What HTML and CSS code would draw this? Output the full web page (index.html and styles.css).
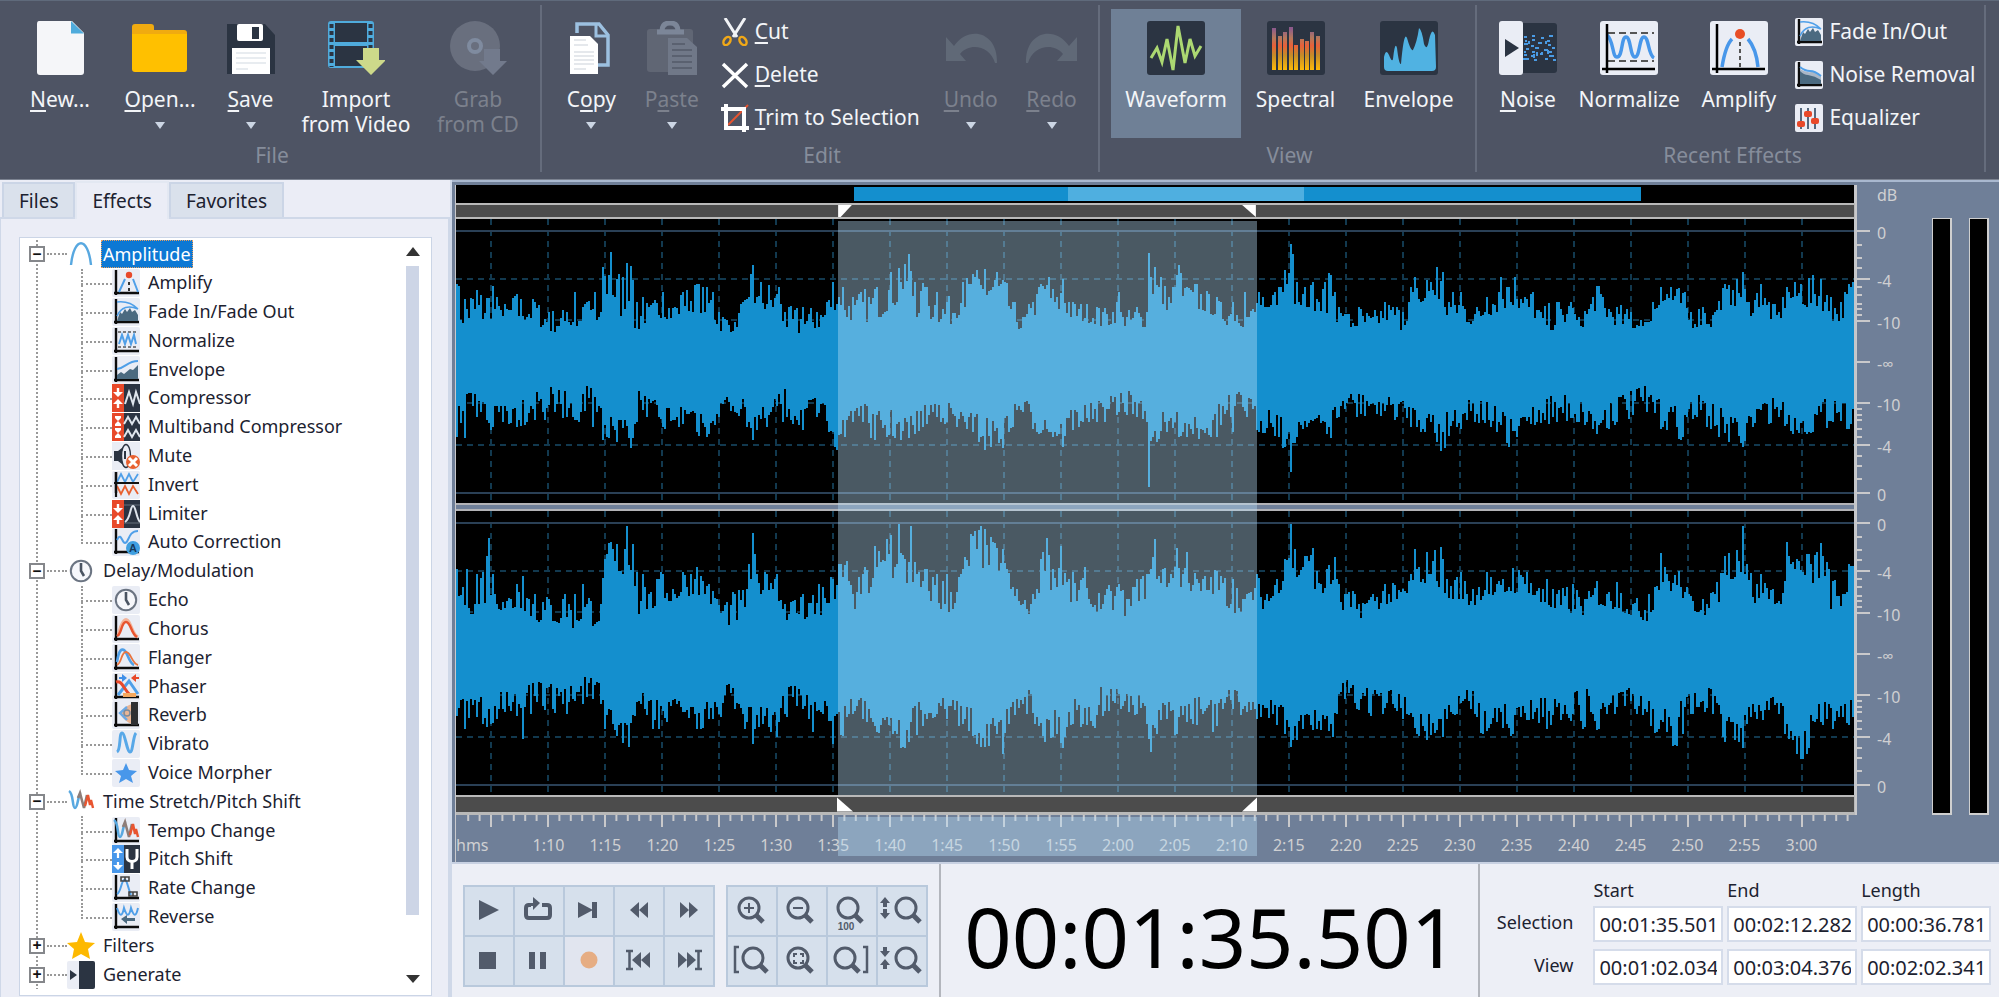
FILE: index.html
```html
<!DOCTYPE html>
<html lang="en">
<head>
    <meta charset="UTF-8">
    <title>Audio Editor</title>
    <link rel="stylesheet" href="styles.css">
</head>
<body>
<svg class="defs" aria-hidden="true">
    <symbol id="axes" viewBox="0 0 28 28">
        <rect width="28" height="28" rx="2" fill="#eaedf5"/>
        <path d="M4 1v25M2 24h25" stroke="#0c0c0c" stroke-width="2.4" fill="none"/>
    </symbol>
    <symbol id="i-amplitude" viewBox="0 0 28 28"><path d="M4 25C7 -4 21 -4 24 25" fill="none" stroke="#58a8e0" stroke-width="2.4"/></symbol>
    <symbol id="i-amplify" viewBox="0 0 28 28"><use href="#axes"/><path d="M7 23l6-13M21 10l5 13" stroke="#4f9fe8" stroke-width="2" fill="none"/><circle cx="17" cy="6" r="3.2" fill="#e8492a"/><path d="M17 13v10" stroke="#333" stroke-width="2" stroke-dasharray="3 3"/></symbol>
    <symbol id="i-fade" viewBox="0 0 28 28"><use href="#axes"/><path d="M5 23l3-9 2 2 3-5 2 3 3-4 2 4 3-2 3 5v6z" fill="#4b6a80"/><path d="M5 4c8-1 16 2 21 7M5 18C9 9 17 7 26 11" stroke="#4f9fe8" stroke-width="1.6" fill="none"/></symbol>
    <symbol id="i-normalize" viewBox="0 0 28 28"><use href="#axes"/><path d="M6 5h20M6 20h20" stroke="#555" stroke-width="1.4" stroke-dasharray="3 2"/><path d="M7 17l3-9 3 9 3-9 3 9 3-9 2 9" stroke="#4f9fe8" stroke-width="2" fill="none"/></symbol>
    <symbol id="i-envelope" viewBox="0 0 28 28"><use href="#axes"/><path d="M5 23v-4l4-3 3 2 6-5 3 1 5-5v14z" fill="#4b6a80"/><path d="M5 13c9-1 10-8 21-8" stroke="#4f9fe8" stroke-width="2" fill="none"/></symbol>
    <symbol id="i-compressor" viewBox="0 0 28 28"><path d="M0 0h12v28H0z" fill="#e8492a"/><path d="M12 0h16v28H12z" fill="#2b3442"/><path d="M6 4v7M6 24v-7" stroke="#fff" stroke-width="2.4"/><path d="M1 8h10l-5 5zM1 20h10l-5-5z" fill="#fff"/><path d="M13 20l4-12 4 12 3-12 4 12" fill="none" stroke="#dfe5ec" stroke-width="2"/></symbol>
    <symbol id="i-multiband" viewBox="0 0 28 28"><path d="M0 0h12v28H0z" fill="#e8492a"/><path d="M12 0h16v28H12z" fill="#2b3442"/><path d="M3 4h6M3 12h6M3 16h6M3 24h6" stroke="#fff" stroke-width="1.8"/><path d="M3 5h6L6 8l3 3H3l3-3zM3 17h6l-3 3 3 3H3l3-3z" fill="#fff"/><path d="M12 11l4-7 4 7 4-7 4 7M12 24l4-7 4 7 4-7 4 7" fill="none" stroke="#dfe5ec" stroke-width="2"/></symbol>
    <symbol id="i-mute" viewBox="0 0 28 28"><rect width="28" height="28" fill="#eaedf5"/><path d="M2 9h4l9-7v24l-9-7H2z" fill="#2b3442"/><ellipse cx="14" cy="14" rx="4.5" ry="11.5" fill="#eaedf5" stroke="#2b3442" stroke-width="1.4"/><path d="M13 9v8" stroke="#2b3442" stroke-width="2"/><circle cx="21" cy="20" r="7" fill="#e8602f"/><path d="M17 16l8 8M25 16l-8 8" stroke="#fff" stroke-width="3"/></symbol>
    <symbol id="i-invert" viewBox="0 0 28 28"><use href="#axes"/><path d="M2 22h25v5H2z" fill="#eaedf5"/><path d="M5 11l4-8 4 8 4-8 4 8 5-8" stroke="#4f9fe8" stroke-width="1.8" fill="none"/><path d="M5 15l4 8 4-8 4 8 4-8 5 8" stroke="#e8602f" stroke-width="1.8" fill="none"/><path d="M4 1v25M2 12h25" stroke="#111" stroke-width="2.2"/></symbol>
    <symbol id="i-limiter" viewBox="0 0 28 28"><path d="M0 0h12v28H0z" fill="#e8492a"/><path d="M12 0h16v28H12z" fill="#2b3442"/><path d="M6 4v7M6 24v-7" stroke="#fff" stroke-width="2.4"/><path d="M1 8h10l-5 5zM1 20h10l-5-5z" fill="#fff"/><path d="M12 5h16M12 23h16" stroke="#66707d"/><path d="M13 22c6-4 5-16 8-16s3 12 7 16" fill="none" stroke="#dfe5ec" stroke-width="2"/></symbol>
    <symbol id="i-auto" viewBox="0 0 28 28"><use href="#axes"/><path d="M5 12c4-9 5 3 8 3 4 0 3-12 13-12" stroke="#4f9fe8" stroke-width="2" fill="none"/><circle cx="21" cy="20" r="7" fill="#3f9fe0"/><text x="21" y="24" text-anchor="middle" class="badge-text">A</text></symbol>
    <symbol id="i-clock" viewBox="0 0 28 28"><circle cx="14" cy="14" r="10.2" fill="#f6f7fb" stroke="#6b7482" stroke-width="2"/><path d="M14 6v8l3 5" stroke="#4a5462" stroke-width="2.6" fill="none"/></symbol>
    <symbol id="i-echo" viewBox="0 0 28 28"><rect width="28" height="28" rx="2" fill="#eaedf5"/><use href="#i-clock"/></symbol>
    <symbol id="i-chorus" viewBox="0 0 28 28"><use href="#axes"/><path d="M6 21C10 4 14 2 17 7s4 13 9 15" stroke="#f3b49a" stroke-width="3" fill="none"/><path d="M5 21c5-2 4-14 9-14s5 12 11 15" stroke="#e8542f" stroke-width="2.4" fill="none"/></symbol>
    <symbol id="i-flanger" viewBox="0 0 28 28"><use href="#axes"/><path d="M5 18C7 5 10 4 13 7s4 12 9 14" stroke="#4f9fe8" stroke-width="2.6" fill="none"/><path d="M5 21c5-2 4-13 9-13s6 12 12 13" stroke="#e8743f" stroke-width="1.8" fill="none"/></symbol>
    <symbol id="i-phaser" viewBox="0 0 28 28"><use href="#axes"/><path d="M6 22L17 8l9 13" stroke="#4f9fe8" stroke-width="3" fill="none"/><path d="M4 9c6-2 7 6 14 13" stroke="#e8492a" stroke-width="3" fill="none"/><path d="M11 22h13" stroke="#f4a85e" stroke-width="4"/><path d="M7 4h3V1l5 4-5 4V6H7z" fill="#3f8fe8"/><path d="M27 4h-3V1l-5 4 5 4V6h3z" fill="#e8492a"/></symbol>
    <symbol id="i-reverb" viewBox="0 0 28 28"><use href="#axes"/><path d="M20 3C12 5 8 12 8 12s3 8 12 11z" fill="#e9b595"/><path d="M15 6l-7 6 7 7" stroke="#68a9e8" stroke-width="2.4" fill="none"/><circle cx="15" cy="12" r="3" fill="none" stroke="#7b8b9c" stroke-width="1.5"/><path d="M19 1h7v23h-7z" fill="#2d2f33"/></symbol>
    <symbol id="i-vibrato" viewBox="0 0 28 28"><rect width="28" height="28" rx="2" fill="#eaedf5"/><path d="M5 22C9 20 7 3 10 3s5 19 8 19S21 6 24 3" stroke="#58a8e8" stroke-width="3" fill="none"/></symbol>
    <symbol id="i-morpher" viewBox="0 0 28 28"><rect width="28" height="28" rx="2" fill="#eaedf5"/><path d="M14 4l3 7 8 1-6 5 2 7-7-4-7 4 2-7-6-5 8-1z" fill="#4897ea"/></symbol>
    <symbol id="i-stretch" viewBox="0 0 28 28"><path d="M2 3c5 3 3 17 6 17S11 5 14 6" stroke="#58a8e0" stroke-width="2.6" fill="none"/><path d="M11 10l2-5 4 15 3-13" stroke="#8e7d78" stroke-width="2.6" fill="none"/><path d="M18 18l3-11 2 10 1-5 2 8" stroke="#e8542f" stroke-width="2.4" fill="none"/></symbol>
    <symbol id="i-tempo" viewBox="0 0 28 28"><use href="#axes"/><use href="#i-stretch"/></symbol>
    <symbol id="i-pitch" viewBox="0 0 28 28"><path d="M0 0h12v28H0z" fill="#4897ea"/><path d="M12 0h16v28H12z" fill="#2b3442"/><path d="M6 5v8M6 17v6" stroke="#fff" stroke-width="2.2"/><path d="M1 8h10L6 3zM1 20h10l-5 5z" fill="#fff"/><path d="M15 4v8c0 6 10 6 10 0V4M20 16v8" stroke="#fff" stroke-width="3" fill="none"/></symbol>
    <symbol id="i-rate" viewBox="0 0 28 28"><use href="#axes"/><path d="M5 20C9 18 9 8 12 6s4 9 7 15" stroke="#4f9fe8" stroke-width="2" fill="none"/><path d="M9 3h8v4H9zM13 3v4M17 18h8v4h-8zM21 18v4" stroke="#444" stroke-width="1.6" fill="none"/></symbol>
    <symbol id="i-reverse" viewBox="0 0 28 28"><use href="#axes"/><path d="M5 5c3 9 5 9 7 0 3 9 5 9 7 0 3 9 5 9 7 0" stroke="#4f9fe8" stroke-width="2" fill="none"/><path d="M9 16l6-4v3h8v3h-8v3z" fill="#4b6a80"/></symbol>
    <symbol id="i-star" viewBox="0 0 28 28"><path d="M14 0l4 10 10 1-7 6 2 10-9-5-9 5 2-10-7-6 10-1z" fill="#fdb900"/></symbol>
    <symbol id="i-generate" viewBox="0 0 28 28"><rect width="28" height="28" rx="2" fill="#eaedf5"/><path d="M12 0h14q2 0 2 2v24q0 2-2 2H12z" fill="#2b3442"/><path d="M3 9l7 5-7 5z" fill="#2b3442"/></symbol>
    <symbol id="i-lens" viewBox="0 0 48 48"><circle cx="21" cy="21" r="10" fill="none" stroke="#525b6b" stroke-width="3"/><path d="M28 28l7 7" stroke="#525b6b" stroke-width="5"/></symbol>
</svg>

<header class="ribbon">
    <section class="group file">
        <div class="tools">
            <button class="tool"><svg viewBox="0 0 58 54"><path d="M8 0h33l12 12v39q0 3-3 3H9q-3 0-3-3V3q0-3 2-3z" fill="#f5f6f9"/><path d="M40 0l13 12.5H40z" fill="#4fabdc"/></svg><span><u>N</u>ew...</span></button>
            <button class="tool"><svg viewBox="0 0 58 54"><path d="M1 6q0-3 3-3h16q3 0 3 3v3h30q3 0 3 3v6H1z" fill="#f0ab10"/><path d="M1 13h55v35q0 3-3 3H4q-3 0-3-3z" fill="#ffc000"/></svg><span><u>O</u>pen...</span><i class="drop"></i></button>
            <button class="tool"><svg viewBox="0 0 58 54"><path d="M5 3h38l10 11v39H5z" fill="#2b3442"/><rect x="15" y="3" width="26" height="17" rx="2" fill="#fff"/><path d="M30 6h7v12h-7z" fill="#2b3442"/><path d="M10 27h38v26H10z" fill="#fff"/><path d="M14 32h30M14 37h30M14 42h30M14 48h12" stroke="#e8ecf0" stroke-width="2"/></svg><span><u>S</u>ave</span><i class="drop"></i></button>
            <button class="tool"><svg viewBox="0 0 58 54"><rect x="1" width="46" height="47" rx="3" fill="#4fabdc"/><path d="M8 2h32v19H8zM8 25h32v20H8z" fill="#2b3442"/><path d="M4.5 3v43M43.5 3v43" stroke="#2b3442" stroke-width="4" stroke-dasharray="4 3"/><path d="M36 27h16v12h7L44 54 29 39h7z" fill="#cdd98a"/></svg><span>Import<br>from Video</span></button>
            <button class="tool" disabled><svg viewBox="0 0 58 54"><circle cx="26" cy="25" r="25" fill="#696f7e"/><circle cx="26" cy="25" r="6" fill="none" stroke="#7f8b9f" stroke-width="4"/><path d="M35 28h16v12h7L44 54 30 40h5z" fill="#727a8c"/></svg><span>Grab<br>from CD</span></button>
        </div>
        <h2>File</h2>
    </section>
    <section class="group edit">
        <div class="tools">
            <button class="tool"><svg viewBox="0 0 58 54"><path d="M15 12V3h22l9 11v30H36" fill="none" stroke="#9cc0e0" stroke-width="3.5"/><path d="M34 4v11h12" fill="none" stroke="#9cc0e0" stroke-width="3"/><path d="M8 15h20l8 8v30H8z" fill="#fff"/><path d="M12 19h12M12 24h14M12 31h20M12 35h20M12 39h20M12 43h20M12 48h12" stroke="#dde1e6" stroke-width="1.5"/></svg><span>C<u>o</u>py</span><i class="drop"></i></button>
            <button class="tool" disabled><svg viewBox="0 0 58 54"><rect x="4" y="8" width="46" height="43" rx="3" fill="#606674"/><path d="M14 11h27M19 10q0-8 8-8t8 8" fill="none" stroke="#7c8698" stroke-width="5"/><path d="M25 17h19l10 9v28H25z" fill="#707888"/><path d="M29 23h13M29 29h20M29 35h20M29 41h20M29 47h20" stroke="#5a6170" stroke-width="2"/></svg><span>P<u>a</u>ste</span><i class="drop"></i></button>
            <div class="stack">
                <button class="mini"><svg viewBox="0 0 28 28"><path d="M4 0l12 19M24 0L12 19" stroke="#f1f3f6" stroke-width="3"/><ellipse cx="6" cy="23" rx="3" ry="4.5" transform="rotate(35 6 23)" fill="none" stroke="#f0a818" stroke-width="2.5"/><ellipse cx="22" cy="23" rx="3" ry="4.5" transform="rotate(-35 22 23)" fill="none" stroke="#f0a818" stroke-width="2.5"/></svg><span><u>C</u>ut</span></button>
                <button class="mini"><svg viewBox="0 0 28 28"><path d="M2 3l24 23M26 3L2 26" stroke="#fff" stroke-width="3.5"/></svg><span><u>D</u>elete</span></button>
                <button class="mini"><svg viewBox="0 0 28 28"><path d="M7 21L27 1" stroke="#e8542f" stroke-width="2"/><path d="M5 0v24h23M0 5h23v23" fill="none" stroke="#fff" stroke-width="4"/></svg><span><u>T</u>rim to Selection</span></button>
            </div>
            <button class="tool" disabled><svg viewBox="0 0 58 54"><path d="M4 16v24h20l-6-7c10-12 30-8 35 9h2C56 10 26 4 12 25z" fill="#606977"/></svg><span><u>U</u>ndo</span><i class="drop"></i></button>
            <button class="tool" disabled><svg viewBox="0 0 58 54"><path d="M54 16v24H34l6-7C30 21 10 25 5 42H3C2 10 32 4 46 25z" fill="#606977"/></svg><span><u>R</u>edo</span><i class="drop"></i></button>
        </div>
        <h2>Edit</h2>
    </section>
    <section class="group view">
        <div class="tools">
            <button class="tool on"><svg viewBox="0 0 58 54"><rect width="58" height="54" rx="3" fill="#2b3442"/><path d="M4 37l6-10 5 14 5-23 6 31 5-44 7 37 5-24 5 17 6-10" fill="none" stroke="#acd872" stroke-width="3"/></svg><span>Waveform</span></button>
            <button class="tool"><svg viewBox="0 0 58 54"><defs><linearGradient id="heat" x2="0" y2="49" gradientUnits="userSpaceOnUse"><stop offset=".15" stop-color="#8c5a8c"/><stop offset=".35" stop-color="#b5795a"/><stop offset=".5" stop-color="#e8603a"/><stop offset=".7" stop-color="#c58c28"/><stop offset="1" stop-color="#fdb90a"/></linearGradient></defs><rect width="58" height="54" rx="3" fill="#2b3442"/><path d="M5 7h4v42H5zM11 15h4v34h-4zM16 11h4v38h-4zM22 6h4v43h-4zM27 24h4v25h-4zM33 18h4v31h-4zM38 20h4v29h-4zM43 11h4v38h-4zM49 15h4v34h-4z" fill="url(#heat)"/></svg><span>Spectral</span></button>
            <button class="tool"><svg viewBox="0 0 58 54"><rect width="58" height="54" rx="3" fill="#2b3442"/><path d="M4 46V36q2-9 5-2 3 8 4 4 2-19 4-11 2 17 4 16 3-34 6-26 4 14 6 12 4-8 6-22 3 2 5 16 3 8 5-4 3-14 6-5l1 32q0 4-4 4H8q-4 0-4-4z" fill="#50b2e2"/></svg><span>Envelope</span></button>
        </div>
        <h2>View</h2>
    </section>
    <section class="group recent">
        <div class="tools">
            <button class="tool"><svg viewBox="0 0 58 54"><rect x="16" y="2" width="42" height="50" rx="3" fill="#2b3442"/><rect width="24" height="54" rx="3" fill="#eaedf5"/><path d="M6 18l14 9-14 9z" fill="#2b3442"/><path d="M25 16h3m5-1h3m6 2h3m5-2h4M26 20h2m5-1h3m4 3h2m6-2h3M25 23h4m3 2h3m4-3h4m6 2h3M27 28h3m6-1h4m5 2h4m4-2h3M25 31h2m6 0h3m6 1h2m5-1h4M25 34h3m4 1h4m5-2h3m6 2h5M24 38h6m5 1h3m8-1h3m5 1h3M30 20v3m8 8v4m9-15v3m-12 10v4m14-8v4" stroke="#4a9be4" stroke-width="2" fill="none"/></svg><span><u>N</u>oise</span></button>
            <button class="tool"><svg viewBox="0 0 58 54"><rect width="58" height="54" rx="3" fill="#eaedf5"/><path d="M8 12h46M8 40h46" stroke="#555" stroke-width="2" stroke-dasharray="7 4"/><path d="M7 14c7 6 5 22 10 22 6 0 4-20 9-20s4 20 9 20 4-20 9-20 4 18 10 21" fill="none" stroke="#4897ea" stroke-width="3.5"/><path d="M7 3v49M2 48h53" stroke="#000" stroke-width="2.5"/></svg><span>Normalize</span></button>
            <button class="tool"><svg viewBox="0 0 58 54"><rect width="58" height="54" rx="3" fill="#eaedf5"/><path d="M12 46C14 34 17 23 22 18M38 18c6 7 9 18 10 28" fill="none" stroke="#4897ea" stroke-width="3.5"/><circle cx="30" cy="13" r="5" fill="#e84e26"/><path d="M30 21v26" stroke="#555" stroke-width="2" stroke-dasharray="4 3"/><path d="M7 3v49M2 48h53" stroke="#000" stroke-width="2.5"/></svg><span>Amplify</span></button>
            <div class="stack">
                <button class="mini"><svg><use href="#i-fade"/></svg><span>Fade In/Out</span></button>
                <button class="mini"><svg viewBox="0 0 28 28"><use href="#axes"/><path d="M5 8q6 4 11 3t10 4v8H5z" fill="#aab7c6"/><path d="M5 10q4 4 8 4 7 1 13 5v4H5z" fill="#4b6a80"/><path d="M5 6q5 4 10 4t11 5" stroke="#4f9fe8" stroke-width="2" fill="none"/></svg><span>Noise Removal</span></button>
                <button class="mini"><svg viewBox="0 0 28 28"><rect width="28" height="28" rx="2" fill="#eaedf5"/><path d="M6 4v21M13 4v21M20 4v21" stroke="#54687e" stroke-width="2"/><rect x="2" y="17" width="8" height="6" rx="2" fill="#e8492a"/><rect x="9" y="7" width="8" height="6" rx="2" fill="#e8492a"/><rect x="16" y="14" width="8" height="6" rx="2" fill="#e8492a"/></svg><span>Equalizer</span></button>
            </div>
        </div>
        <h2>Recent Effects</h2>
    </section>
</header>

<div class="main">
    <aside class="side">
        <div class="tabs">
            <button>Files</button>
            <button class="on">Effects</button>
            <button>Favorites</button>
        </div>
        <div class="pane">
            <div class="treebox">
                <ul class="tree">
                    <li class="root"><button aria-label="Collapse">&#8722;</button><i class="dots"></i><svg><use href="#i-amplitude"/></svg><a href="#" class="picked">Amplitude</a></li>
                    <li><i class="twig"></i><svg><use href="#i-amplify"/></svg><a href="#">Amplify</a></li>
                    <li><i class="twig"></i><svg><use href="#i-fade"/></svg><a href="#">Fade In/Fade Out</a></li>
                    <li><i class="twig"></i><svg><use href="#i-normalize"/></svg><a href="#">Normalize</a></li>
                    <li><i class="twig"></i><svg><use href="#i-envelope"/></svg><a href="#">Envelope</a></li>
                    <li><i class="twig"></i><svg><use href="#i-compressor"/></svg><a href="#">Compressor</a></li>
                    <li><i class="twig"></i><svg><use href="#i-multiband"/></svg><a href="#">Multiband Compressor</a></li>
                    <li><i class="twig"></i><svg><use href="#i-mute"/></svg><a href="#">Mute</a></li>
                    <li><i class="twig"></i><svg><use href="#i-invert"/></svg><a href="#">Invert</a></li>
                    <li><i class="twig"></i><svg><use href="#i-limiter"/></svg><a href="#">Limiter</a></li>
                    <li class="last"><i class="twig"></i><svg><use href="#i-auto"/></svg><a href="#">Auto Correction</a></li>
                    <li class="root"><button aria-label="Collapse">&#8722;</button><i class="dots"></i><svg><use href="#i-clock"/></svg><a href="#">Delay/Modulation</a></li>
                    <li><i class="twig"></i><svg><use href="#i-echo"/></svg><a href="#">Echo</a></li>
                    <li><i class="twig"></i><svg><use href="#i-chorus"/></svg><a href="#">Chorus</a></li>
                    <li><i class="twig"></i><svg><use href="#i-flanger"/></svg><a href="#">Flanger</a></li>
                    <li><i class="twig"></i><svg><use href="#i-phaser"/></svg><a href="#">Phaser</a></li>
                    <li><i class="twig"></i><svg><use href="#i-reverb"/></svg><a href="#">Reverb</a></li>
                    <li><i class="twig"></i><svg><use href="#i-vibrato"/></svg><a href="#">Vibrato</a></li>
                    <li class="last"><i class="twig"></i><svg><use href="#i-morpher"/></svg><a href="#">Voice Morpher</a></li>
                    <li class="root"><button aria-label="Collapse">&#8722;</button><i class="dots"></i><svg><use href="#i-stretch"/></svg><a href="#">Time Stretch/Pitch Shift</a></li>
                    <li><i class="twig"></i><svg><use href="#i-tempo"/></svg><a href="#">Tempo Change</a></li>
                    <li><i class="twig"></i><svg><use href="#i-pitch"/></svg><a href="#">Pitch Shift</a></li>
                    <li><i class="twig"></i><svg><use href="#i-rate"/></svg><a href="#">Rate Change</a></li>
                    <li class="last"><i class="twig"></i><svg><use href="#i-reverse"/></svg><a href="#">Reverse</a></li>
                    <li class="root"><button aria-label="Expand">+</button><i class="dots"></i><svg><use href="#i-star"/></svg><a href="#">Filters</a></li>
                    <li class="root"><button aria-label="Expand">+</button><i class="dots"></i><svg><use href="#i-generate"/></svg><a href="#">Generate</a></li>
                </ul>
                <div class="scroll"><i class="up"></i><i class="thumb"></i><i class="down"></i></div>
            </div>
        </div>
    </aside>

    <main class="work">
        <div class="editor">
            <div class="waves">
                <div class="overview"><i class="before"></i><i class="shown"></i><i class="chosen"></i><i class="shown tail"></i><i class="after"></i></div>
                <div class="band top">
                    <i class="pre"></i>
                    <span class="sel"><svg viewBox="0 0 16 14"><path d="M0 0h16L3 14H0z"/></svg><svg viewBox="0 0 16 14"><path d="M0 0h16v14z"/></svg></span>
                    <i class="post"></i>
                </div>
                <div class="channels">
                    <svg class="channel" viewBox="0 0 1398 284" preserveAspectRatio="none"></svg>
                    <div class="split"></div>
                    <svg class="channel" viewBox="0 0 1398 284" preserveAspectRatio="none"></svg>
                    <div class="shade"></div>
                </div>
                <div class="band bottom">
                    <i class="pre"></i>
                    <span class="sel"><svg viewBox="0 0 16 14"><path d="M0 0l16 14H0z"/></svg><svg viewBox="0 0 16 14"><path d="M16 0v14H1z"/></svg></span>
                    <i class="post"></i>
                </div>
                <div class="ruler">
                    <svg id="ticks" viewBox="0 0 1398 14" preserveAspectRatio="none"></svg>
                    <div class="times" id="times"><span class="unit">hms</span></div>
                    <div class="shade"></div>
                </div>
            </div>
            <svg class="scale" id="scale" width="76" height="630"></svg>
            <div class="meters"><i></i><i></i></div>
        </div>

        <div class="controls">
            <div class="pads">
                <div class="pad transport">
                    <button aria-label="Play"><svg viewBox="0 0 48 48"><path d="M14 13l20 10-20 10z"/></svg></button>
                    <button aria-label="Loop"><svg viewBox="0 0 48 48"><path d="M16 18h-2q-3 0-3 3v7q0 3 3 3h18q3 0 3-3v-7q0-3-3-3h-5" fill="none" stroke="#525b6b" stroke-width="4"/><path d="M18 10l7 6-7 7z"/><path d="M13 16h7v3h-7z"/></svg></button>
                    <button aria-label="Play to end"><svg viewBox="0 0 48 48"><path d="M13 15l15 8-15 8zM27 15h5v16h-5z"/></svg></button>
                    <button aria-label="Rewind"><svg viewBox="0 0 48 48"><path d="M24 15v16l-9-8zM33 15v16l-9-8z"/></svg></button>
                    <button aria-label="Forward"><svg viewBox="0 0 48 48"><path d="M15 15v16l9-8zM24 15v16l9-8z"/></svg></button>
                    <button aria-label="Stop"><svg viewBox="0 0 48 48"><path d="M14 15h17v17H14z"/></svg></button>
                    <button aria-label="Pause"><svg viewBox="0 0 48 48"><path d="M14 15h6v17h-6zM25 15h6v17h-6z"/></svg></button>
                    <button aria-label="Record" class="record"><svg viewBox="0 0 48 48"><circle cx="24" cy="23" r="8.5" fill="#e6ad83"/></svg></button>
                    <button aria-label="To start"><svg viewBox="0 0 48 48"><path d="M26 15v16l-9-8zM35 15v16l-9-8z"/><path d="M11 14h7M11 32h7M14.5 14v18" stroke="#525b6b" stroke-width="2.5"/></svg></button>
                    <button aria-label="To end"><svg viewBox="0 0 48 48"><path d="M13 15v16l9-8zM22 15v16l9-8z"/><path d="M30 14h7M30 32h7M33.5 14v18" stroke="#525b6b" stroke-width="2.5"/></svg></button>
                </div>
                <div class="pad zooms">
                    <button aria-label="Zoom in"><svg viewBox="0 0 48 48"><use href="#i-lens"/><path d="M16 21h10M21 16v10" stroke="#525b6b" stroke-width="2"/></svg></button>
                    <button aria-label="Zoom out"><svg viewBox="0 0 48 48"><use href="#i-lens" x="-1"/><path d="M15 21h10" stroke="#525b6b" stroke-width="2"/></svg></button>
                    <button aria-label="Zoom 100"><svg viewBox="0 0 48 48"><use href="#i-lens" x="-1"/><text x="18" y="43" text-anchor="middle" class="hundred">100</text></svg></button>
                    <button aria-label="Zoom in vertically"><svg viewBox="0 0 48 48"><use href="#i-lens" x="7"/><path d="M2 16l5-6 5 6H9v4H5v-4zM2 26l5 6 5-6H9v-4H5v4z"/></svg></button>
                    <button aria-label="Zoom to start"><svg viewBox="0 0 48 48"><use href="#i-lens" x="4"/><path d="M11 10H7v25h4" fill="none" stroke="#525b6b" stroke-width="2.5"/></svg></button>
                    <button aria-label="Zoom to selection"><svg viewBox="0 0 48 48"><use href="#i-lens" x="-1"/><path d="M16 20v-3h3M22 17h3v3M25 23v3h-3M19 26h-3v-3" fill="none" stroke="#525b6b" stroke-width="2"/></svg></button>
                    <button aria-label="Zoom to end"><svg viewBox="0 0 48 48"><use href="#i-lens" x="-4"/><path d="M35 10h4v25h-4" fill="none" stroke="#525b6b" stroke-width="2.5"/></svg></button>
                    <button aria-label="Zoom out vertically"><svg viewBox="0 0 48 48"><use href="#i-lens" x="7"/><path d="M2 14l5 6 5-6H9v-4H5v4zM2 28l5-6 5 6H9v4H5v-4z"/></svg></button>
                </div>
            </div>
            <div class="clock">00:01:35.501</div>
            <div class="fields">
                <span></span><b>Start</b><b>End</b><b>Length</b>
                <label for="sel-start">Selection</label>
                <input id="sel-start" value="00:01:35.501"><input aria-label="Selection end" value="00:02:12.282"><input aria-label="Selection length" value="00:00:36.781">
                <label for="view-start">View</label>
                <input id="view-start" value="00:01:02.034"><input aria-label="View end" value="00:03:04.376"><input aria-label="View length" value="00:02:02.341">
            </div>
        </div>
    </main>
</div>
<script src="script.js"></script>
</body>
</html>
```

FILE: styles.css
```css
*{ margin:0; padding:0; box-sizing:border-box;}
body{
    min-height: 100vh;
    padding-bottom: 4px;
    display: flex;
    flex-direction: column;
    background: #fff;
    font-family: "Noto Sans", "Open Sans", sans-serif;
    font-size: 18px;
    color: #1c2230;
}
button{
    border: 0;
    background: none;
    font: inherit;
    color: inherit;
}
a{ color: inherit; text-decoration: none;}
ul{ list-style: none;}
i{ font-style: normal; display: block;}
.defs{ display: none;}
.badge-text{ font: bold 11px "Liberation Sans", sans-serif; fill: #16395c;}
.hundred{ font: bold 10px "Liberation Sans", sans-serif; fill: #525b6b;}

/* ribbon */
.ribbon{
    height: 180px;
    padding: 4px 0 7px;
    border-top: 1px solid #5f6a7b;
    border-bottom: 1px solid #7b8290;
    background: #4e5464;
    display: grid;
    grid-template-columns: 542fr 558fr 377fr 509fr 13fr;
    color: #f3f5f8;
    font-size: 21px;
    line-height: 25px;
}
.group{
    padding-top: 4px;
    border-right: 2px solid #656c7c;
    min-width: 0;
}
.tools{
    display: grid;
    height: 129px;
}
.file .tools{ grid-template-columns: 100fr 100fr 81fr 130fr 114fr; padding: 0 5px 0 10px;}
.edit .tools{ grid-template-columns: 81fr 80fr 219fr 81fr 81fr; padding: 0 6px 0 9px;}
.view .tools{ grid-template-columns: 130fr 109fr 117fr; padding: 0 8px 0 11px;}
.recent .tools{ grid-template-columns: 90fr 113fr 107fr 187fr; padding: 0 5px 0 6px;}
.group h2{
    margin-top: 5px;
    padding-left: 4px;
    text-align: center;
    font-size: 21px;
    font-weight: normal;
    color: #868d9b;
}
.tool{
    display: flex;
    flex-direction: column;
    align-items: center;
    padding-top: 12px;
    white-space: nowrap;
    min-width: 0;
}
.tool svg{ width: 58px; height: 54px; margin-bottom: 12px; flex: none;}
.tool.on{ background: #6f8096;}
.tool:disabled{ color: #7c818d;}
u{ text-underline-offset: 3px; text-decoration-thickness: 2px;}
.drop{
    margin-top: 10px;
    border: 5px solid transparent;
    border-top: 7px solid #ccd6e4;
    border-bottom: 0;
}
.stack{ display: grid; grid-auto-rows: 1fr;}
.edit .stack{ padding-left: 9px;}
.recent .stack{ padding-left: 3px;}
.mini{
    display: flex;
    align-items: center;
    gap: 6px;
    padding-top: 2px;
    white-space: nowrap;
}
.mini svg{ width: 28px; height: 28px; flex: none;}

/* effects tree */
.main{ flex: 1; display: flex;}
.side{
    flex: 0 0 452px;
    display: flex;
    flex-direction: column;
    background: #ebedf6;
    border-right: 2px solid #cfd8e8;
}
.tabs{
    display: flex;
    align-items: flex-end;
    padding-left: 2px;
    height: 37px;
    font-size: 19px;
}
.tabs button{
    height: 35px;
    padding: 0 15px;
    background: #dae1ec;
    border: 2px solid #cbd5e6;
    border-bottom: 0;
    line-height: 34px;
}
.tabs .on{
    height: 38px;
    margin-bottom: -2px;
    background: #ebedf6;
    border-color: #e3e8f2;
    z-index: 1;
    line-height: 32px;
}
.pane{
    flex: 1;
    padding: 18px 16px 1px 18px;
    border: 2px solid #cfd8e8;
    border-width: 2px 2px 0 1px;
    display: flex;
}
.treebox{
    flex: 1;
    display: flex;
    padding: 2px 12px 6px 0;
    background: #fff;
    border: 1px solid #cbd5e6;
}
.tree{
    flex: 1;
    display: grid;
    grid-auto-rows: 1fr;
    background: linear-gradient(#999 50%, transparent 0) 16px 20px / 2px 4px repeat-y;
}
.tree li{
    display: flex;
    align-items: center;
    padding-left: 61px;
    min-height: 28px;
    line-height: 26px;
}
.tree li.root{ padding-left: 9px;}
.tree li svg{ width: 28px; height: 28px; flex: none;}
.tree button{
    width: 16px;
    height: 16px;
    border: 2px solid #85878b;
    background: #fff;
    color: #111;
    font-size: 16px;
    font-weight: bold;
    line-height: 11px;
}
.tree a{ margin-left: 6px; padding: 0 2px; height: 28px;}
.tree .picked{
    color: #fff;
    background: #0c78d4;
    border: 1px dotted #e8a060;
    padding: 0 1px;
}
.dots{ width: 20px; margin: 0 0 0 2px; border-top: 2px dotted #999;}
.twig{ width: 31px; align-self: stretch;}
.twig::before, .twig::after{
    content: "";
    display: block;
    height: 50%;
    border-left: 2px dotted #999;
}
.twig::before{ border-bottom: 2px dotted #999;}
.last .twig::after{ border: 0;}
.scroll{
    width: 13px;
    display: flex;
    flex-direction: column;
    align-items: center;
    padding: 7px 0 6px;
}
.up, .down{ border: 7px solid transparent;}
.up{ border-top: 0; border-bottom: 9px solid #333;}
.down{ border-bottom: 0; border-top: 8px solid #333;}
.thumb{ width: 13px; flex: 1; margin: 10px 0 60px; background: #cdd5e6;}

/* waveform editor */
.work{ flex: 1; min-width: 0; display: flex; flex-direction: column;}
.editor{
    display: flex;
    padding: 3px 10px 0 3px;
    border-top: 2px solid #a9b8cf;
    background: #6f7f98;
}
.waves{
    flex: 1;
    min-width: 0;
    border-left: 1px solid #c9c9cc;
}
.overview{
    display: flex;
    height: 18px;
    padding: 2px 0;
    background: #000;
    border-right: 2px solid #c4c6ca;
}
.before{ flex: 398;}
.shown{ flex: 214; background: #148fce;}
.chosen{ flex: 236; background: #4fafe0;}
.shown.tail{ flex: 337;}
.after{ flex: 213;}
.band{
    display: flex;
    background: #4c4c4c;
    border: 2px solid #b9b9b9;
    border-left: 0;
}
.band.top{ height: 16px;}
.band.bottom{ height: 20px; border-bottom-width: 3px;}
.band .pre{ flex: 381;}
.band .sel{ flex: 420; display: flex; justify-content: space-between;}
.band .post{ flex: 597;}
.band svg{ width: 16px; height: 100%; fill: #fff;}
.channels{
    position: relative;
    background: #000;
    border-right: 2px solid #c4c6ca;
}
.channel{ display: block; width: 100%; height: 284px;}
.split{
    height: 8px;
    background: #6f7f98;
    border: solid #b3b3b6;
    border-width: 2px 0;
}
.wave{ fill: #148fce;}
.grid{ stroke: #12394f; stroke-width: 2; stroke-dasharray: 6 5; fill: none; vector-effect: non-scaling-stroke;}
.limit{ stroke: #2a4056; stroke-width: 2; vector-effect: non-scaling-stroke;}
.shade{
    position: absolute;
    top: 2px;
    bottom: 0;
    left: 27.3%;
    width: 30%;
    background: rgba(185,222,248,.4);
}
.ruler{
    position: relative;
    height: 47px;
    margin-right: 2px;
}
.ruler svg{ display: block; width: 100%; height: 14px;}
.ruler .shade{ bottom: 6px;}
.tick{ stroke: #c9c9cb; stroke-width: 2; fill: none; vector-effect: non-scaling-stroke;}
.times{
    display: flex;
    padding-top: 5px;
    font-size: 16px;
    line-height: 22px;
    color: #cfd0d2;
    white-space: nowrap;
}
.times span{ flex: 57 0 0; text-align: center; min-width: 0;}
.times .unit{ flex-grow: 64; text-align: left;}
.times .rest{ flex-grow: 24;}
.scale{ flex: none; overflow: visible; font-size: 16px; fill: #cfd0d2;}
.meters{ display: flex; gap: 17px; padding: 33px 0 0; height: 630px;}
.meters i{
    width: 20px;
    background: #000;
    border: 1px solid #cfcfcf;
    border-width: 1px 2px 2px 1px;
}

/* transport and time fields */
.controls{
    flex: 1;
    display: grid;
    grid-template-columns: auto 540fr 519fr;
    border-top: 2px solid #c8d1e2;
    background: #edeff6;
}
.pads{ display: flex; gap: 11px; padding: 21px 11px 0;}
.pad{
    display: grid;
    align-self: start;
    gap: 2px;
    padding: 2px;
    background: #b9c9dc;
    grid-template-columns: repeat(5, 48px);
}
.zooms{ grid-template-columns: repeat(4, 48px);}
.pad button{ height: 48px; background: #d6e0ec;}
.pad button.record{ background: #e1e5ef;}
.pad svg{ display: block; width: 48px; height: 48px; fill: #525b6b;}
.clock{
    border: solid #b3b6bd;
    border-width: 0 2px;
    display: flex;
    justify-content: center;
    font-size: 83px;
    line-height: 114px;
    padding: 15px 0 0 4px;
    color: #000;
}
.fields{
    display: grid;
    grid-template-columns: 110fr 130fr 130fr 130fr;
    grid-template-rows: 22px 36px 36px;
    gap: 7px 4px;
    padding: 13px 8px 0 0;
}
.fields b{ font-weight: normal; line-height: 26px;}
.fields label{ text-align: right; padding-right: 16px; line-height: 32px;}
.fields input{
    min-width: 0;
    width: 100%;
    border: 2px solid #d5dcea;
    background: #fff;
    padding: 0 4px;
    font: 20px "Noto Sans", sans-serif;
    color: #1c2230;
}
```

FILE: script.js
```js
// envelope knots for each side of each channel: x, low, high
var data=[
    {
        up:'0,38,78 20,40,72 36,48,76 44,44,52 60,44,68 78,45,60 92,33,50 110,38,50 118,35,70 125,25,55 130,42,60 137,35,70 143,31,50 146,62,95 153,70,110 162,45,88 170,60,99 173,65,96 179,28,60 186,45,65 192,38,55 205,50,70 218,45,55 226,55,70 240,55,78 255,50,70 262,36,50 278,35,40 285,50,60 292,45,65 295,60,97 300,50,65 304,55,80 322,50,75 327,36,50 345,30,55 360,38,50 370,40,60 375,55,80 385,60,75 396,28,65 404,45,70 420,45,75 434,60,90 441,60,94 444,65,80 452,80,108 458,50,80 468,48,75 480,45,70 490,38,60 505,55,80 515,55,88 528,60,93 540,65,90 548,60,80 556,45,60 565,33,45 575,40,60 582,60,75 591,65,85 600,50,65 606,60,83 612,48,60 640,42,55 646,37,50 660,45,60 662,50,70 665,36,45 680,38,55 690,40,50 692,75,109 697,65,95 704,60,85 712,55,65 721,65,97 729,55,75 739,55,78 751,55,68 764,45,60 775,40,60 787,40,70 791,38,45 802,50,70 810,42,55 817,60,70 827,65,92 833,80,118 836,70,108 839,58,80 848,60,75 856,60,80 862,48,60 868,50,80 873,60,87 878,50,70 882,40,55 888,32,48 902,38,55 915,33,45 927,45,60 940,45,55 946,33,50 953,55,75 958,60,85 963,50,60 970,65,82 980,60,95 985,65,90 991,45,60 996,50,70 1003,45,70 1019,40,55 1030,50,65 1043,55,85 1051,60,75 1058,60,85 1068,50,65 1076,50,70 1084,40,50 1099,35,60 1114,45,60 1122,35,45 1135,50,65 1140,60,76 1146,50,65 1160,40,55 1173,38,50 1184,35,42 1191,30,40 1195,45,60 1203,60,75 1214,60,75 1227,55,70 1233,38,50 1246,42,55 1257,37,50 1267,65,78 1276,60,72 1285,65,90 1291,48,60 1303,60,78 1311,48,60 1322,42,50 1329,60,75 1344,65,78 1351,55,84 1363,60,83 1373,45,65 1384,45,60 1396,70,86',
        down:'0,45,75 8,35,76 20,35,55 34,50,68 45,40,60 60,45,65 70,35,60 88,28,58 110,35,55 122,25,60 136,30,65 140,32,50 146,60,78 160,60,80 173,65,86 179,30,60 190,35,55 205,50,65 225,50,62 240,55,70 250,55,75 262,40,55 278,37,50 290,45,65 296,50,78 310,50,65 325,30,60 345,45,68 360,40,55 375,55,70 379,70,88 388,60,75 396,35,60 405,45,60 418,55,78 430,50,75 443,60,78 452,60,76 465,50,65 480,40,55 500,50,65 515,55,70 528,60,88 545,65,86 555,50,65 565,38,50 580,55,70 595,60,75 605,65,85 615,50,68 640,45,60 662,35,50 668,28,50 680,40,55 690,50,60 692,80,125 695,60,75 700,55,80 710,55,70 730,55,75 754,50,75 775,35,70 790,35,55 802,55,70 815,50,65 827,60,85 834,80,110 840,60,75 850,55,65 873,60,76 882,35,55 900,35,55 920,38,52 940,40,55 960,50,65 980,55,80 984,60,89 1000,45,65 1018,37,60 1040,50,70 1052,60,85 1060,60,75 1080,45,60 1100,35,60 1120,40,60 1140,55,72 1160,38,60 1190,28,50 1205,45,65 1225,50,75 1240,37,55 1262,50,75 1285,65,85 1295,50,65 1322,37,55 1335,60,72 1350,60,72 1375,35,60 1396,50,65'
    },
    {
        up:'0,50,85 20,42,80 31,60,116 36,60,80 45,45,52 60,48,70 66,50,78 78,35,60 92,38,55 107,30,60 125,30,70 143,35,50 147,65,95 153,75,112 160,65,110 165,65,80 170,90,128 175,80,110 180,35,82 186,60,80 192,42,60 205,60,80 215,55,65 226,62,82 240,65,87 252,60,70 260,35,55 278,33,60 290,50,65 295,75,121 300,60,80 310,70,80 320,65,80 327,38,50 345,40,60 362,34,70 375,50,75 382,65,90 390,75,93 396,43,60 405,60,80 418,65,108 430,75,115 433,80,119 440,70,90 442,90,130 448,65,95 454,80,128 460,60,80 468,62,85 480,50,80 490,42,80 505,60,85 513,85,120 523,90,128 533,90,117 545,85,105 550,65,85 560,50,65 566,35,50 575,50,60 584,70,95 589,90,116 595,65,85 604,75,108 612,55,75 627,50,87 632,45,55 650,50,65 662,45,70 672,42,55 680,55,75 690,60,80 697,85,115 705,65,85 714,65,80 719,75,106 725,65,80 730,70,102 740,58,75 760,65,83 775,46,75 790,47,60 799,60,80 809,46,60 820,60,75 827,75,95 833,100,130 838,75,105 848,80,98 856,75,106 863,55,70 870,65,85 877,60,97 882,50,70 890,40,60 915,42,60 927,55,70 946,50,65 953,65,80 957,75,105 965,55,75 970,85,102 984,70,107 990,55,75 1003,60,82 1015,50,65 1030,65,82 1040,55,70 1055,65,86 1070,65,82 1085,50,65 1090,50,75 1100,42,60 1115,45,70 1130,43,55 1139,55,73 1150,48,60 1160,50,72 1175,42,50 1191,37,60 1203,65,101 1210,65,80 1222,70,83 1232,47,60 1245,45,55 1257,37,60 1267,75,98 1285,85,128 1290,70,90 1300,50,70 1304,65,80 1315,55,65 1323,45,50 1329,85,112 1340,80,95 1350,65,100 1363,80,111 1372,50,85 1385,45,60 1391,70,90 1396,75,85',
        down:'0,42,62 8,50,75 25,45,70 33,55,70 45,40,55 60,45,62 65,60,85 73,28,60 95,35,55 110,38,60 125,25,50 143,33,50 147,50,75 160,60,82 171,75,93 178,40,62 195,48,75 210,50,68 225,50,58 240,55,75 255,45,65 262,35,60 278,35,55 287,50,75 296,60,90 305,50,70 320,65,83 327,33,60 345,40,55 355,50,78 365,45,60 376,60,90 385,60,82 396,38,60 405,48,65 420,55,78 435,60,80 443,70,94 452,60,88 465,50,72 480,50,60 490,48,65 505,50,70 520,65,90 528,70,93 540,60,80 546,70,100 552,50,70 566,30,50 578,50,70 588,65,88 600,60,80 605,70,94 615,50,70 635,38,72 663,38,55 680,45,60 690,50,70 693,75,98 700,60,80 710,50,65 720,55,80 735,50,70 755,40,78 775,40,55 800,50,65 815,45,60 828,60,80 833,70,93 845,65,75 860,60,75 875,70,83 880,50,60 888,28,45 900,40,55 925,38,60 945,45,65 960,55,80 970,65,86 985,60,83 1000,45,60 1018,37,60 1025,55,80 1040,50,68 1055,60,80 1075,45,65 1090,50,75 1110,45,60 1125,40,75 1135,37,60 1140,60,76 1150,48,60 1180,36,60 1200,60,78 1220,55,92 1235,42,60 1255,38,60 1268,65,88 1285,65,94 1300,50,65 1322,37,60 1328,60,80 1340,80,100 1346,85,105 1352,70,94 1360,50,65 1375,55,75 1396,50,65'
    }
];
var seed=7;
function rnd(){
    seed=(seed*16807)%2147483647;
    return seed/2147483647;
}
// one height per 2px column, knots themselves always reach the high value
function columns(str){
    var k=str.split(' ').map(function(s){ return s.split(',').map(Number); });
    var out=[], n=0;
    for(var x=0;x<1398;x+=2){
        while(n<k.length-2 && k[n+1][0]<=x) n++;
        var a=k[n], b=k[n+1];
        var t=Math.min(1,(x-a[0])/(b[0]-a[0]));
        var lo=a[1]+(b[1]-a[1])*t-5, hi=a[2]+(b[2]-a[2])*t+4;
        var r=rnd();
        out.push(x-a[0]<2 ? a[2] : lo+(hi-lo)*Math.pow(r,1.4));
    }
    return out;
}
function vlines(y){
    var d='';
    for(var i=0;i<24;i++) d+='M'+(35+57*i)+' '+y;
    return d;
}
var ch=document.querySelectorAll('.channel');
for(var c=0;c<2;c++){
    var mid=143, up=columns(data[c].up), down=columns(data[c].down), d='M0 '+mid;
    for(var i=0;i<up.length;i++) d+='V'+Math.round(mid-up[i])+'h2';
    d+='V'+mid;
    for(i=down.length-1;i>=0;i--) d+='V'+Math.round(mid+down[i])+'h-2';
    d+='z';
    ch[c].innerHTML='<path class="grid" d="'+vlines('0v284')+'"/>'+
        '<path class="grid" d="M0 60h1398M0 226h1398M0 101h1398M0 184h1398"/>'+
        '<path class="limit" d="M0 12h1398M0 274h1398"/>'+
        '<path class="wave" d="'+d+'"/>';
}

// time ruler
var t='';
for(i=-3;i<120;i++){
    var x=35+i*11.4;
    if(x>1396 || x<4) continue;
    t+='M'+x.toFixed(1)+' 0v'+(i%5==0?12:6);
}
document.getElementById('ticks').innerHTML='<path class="tick" d="'+t+'"/>';
var html='';
for(var s=70;s<=180;s+=5){
    html+='<span>'+Math.floor(s/60)+':'+('0'+s%60).slice(-2)+'</span>';
}
document.getElementById('times').innerHTML+=html+'<span class="rest"></span>';

// dB scale
var marks=[[131,'0'],[83,'-4'],[41,'-10'],[0,'-\u221e'],[-41,'-10'],[-83,'-4'],[-131,'0']];
var small=[117,104,94,75,67,58,53,47];
var out='<text x="21" y="16">dB</text>', p='M0 0v630';
[177,469].forEach(function(mid){
    marks.forEach(function(m){
        p+='M0 '+(mid-m[0])+'h14';
        out+='<text x="21" y="'+(mid-m[0]+8)+'">'+m[1]+'</text>';
    });
    small.forEach(function(m){
        p+='M0 '+(mid-m)+'h6M0 '+(mid+m)+'h6';
    });
});
document.getElementById('scale').innerHTML='<path class="tick" d="'+p+'"/>'+out;
```
